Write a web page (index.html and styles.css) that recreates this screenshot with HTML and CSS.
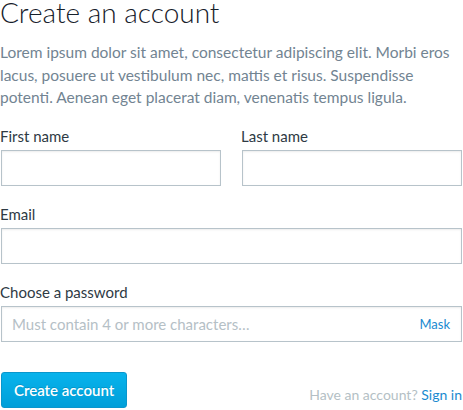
FILE: index.html
```html
<!DOCTYPE html>
<html>
<head>
<meta charset="utf-8">
<link rel="stylesheet" href="styles.css">
</head>
<body>
<div class="page">
  <h1 class="title">Create an account</h1>
  <p class="intro">Lorem ipsum dolor sit amet, consectetur adipiscing elit. Morbi eros lacus, posuere ut vestibulum nec, mattis et risus. Suspendisse potenti. Aenean eget placerat diam, venenatis tempus ligula.</p>
  <form class="form">
    <div class="row">
      <label class="field">
        <span class="label">First name</span>
        <input class="input" type="text">
      </label>
      <label class="field">
        <span class="label">Last name</span>
        <input class="input" type="text">
      </label>
    </div>
    <div class="row">
      <label class="field">
        <span class="label">Email</span>
        <input class="input" type="email">
      </label>
    </div>
    <div class="row">
      <label class="field">
        <span class="label">Choose a password</span>
        <span class="pw-wrap">
          <input class="input pw" type="password" placeholder="Must contain 4 or more characters…">
          <span class="mask">Mask</span>
        </span>
      </label>
    </div>
    <div class="actions">
      <button class="btn" type="button">Create account</button>
      <span class="signin">Have an account? <a class="link" href="#">Sign in</a></span>
    </div>
  </form>
</div>
</body>
</html>
```
FILE: styles.css
```css
html, body {
  margin: 0;
  padding: 0;
  background: #fff;
}
body {
  font-family: Lato, "Noto Sans", sans-serif;
  color: #333c44;
}
.page {
  width: 461px;
  padding: 0 1px;
}
.title {
  margin: 0 0 0 -1px;
  font-size: 28px;
  font-weight: 300;
  line-height: 25px;
  color: #16202a;
}
.intro {
  margin: 16px 0 0 -1px;
  max-width: 452px;
  font-size: 15.5px;
  line-height: 22.5px;
  color: #728492;
}
.form {
  margin-top: 17px;
}
.row {
  display: flex;
  gap: 21px;
  margin-bottom: 18px;
}
.field {
  flex: 1;
  display: flex;
  flex-direction: column;
}
.label {
  font-size: 15px;
  line-height: 20px;
  color: #2e3a44;
  margin-bottom: 4px;
  margin-left: -1px;
}
.input {
  box-sizing: border-box;
  height: 36px;
  width: 100%;
  margin: 0;
  border: 1px solid #b7c3ca;
  border-radius: 0;
  box-shadow: inset 0 1px 2px rgba(0,0,0,0.08);
  font-family: inherit;
  font-size: 15px;
  padding: 0 10px;
  outline: none;
}
.pw-wrap {
  position: relative;
  display: block;
}
.pw::placeholder {
  color: #b5c0c6;
}
.mask {
  position: absolute;
  right: 12px;
  top: 10px;
  font-size: 13px;
  color: #1a8ad0;
}
.actions {
  display: flex;
  justify-content: space-between;
  align-items: center;
  margin-top: 30px;
}
.btn {
  height: 36px;
  padding: 0 12px;
  border: 1px solid #0a96cc;
  border-radius: 3px;
  background: linear-gradient(#08b3ec, #009fd9);
  color: #fff;
  font-family: inherit;
  font-size: 15px;
  font-weight: 600;
  text-shadow: 0 -1px 0 rgba(0,0,0,0.15);
}
.signin {
  font-size: 14px;
  color: #b4bfc5;
  margin-top: 10px;
}
.link {
  color: #1a8ad0;
  text-decoration: none;
}
```
